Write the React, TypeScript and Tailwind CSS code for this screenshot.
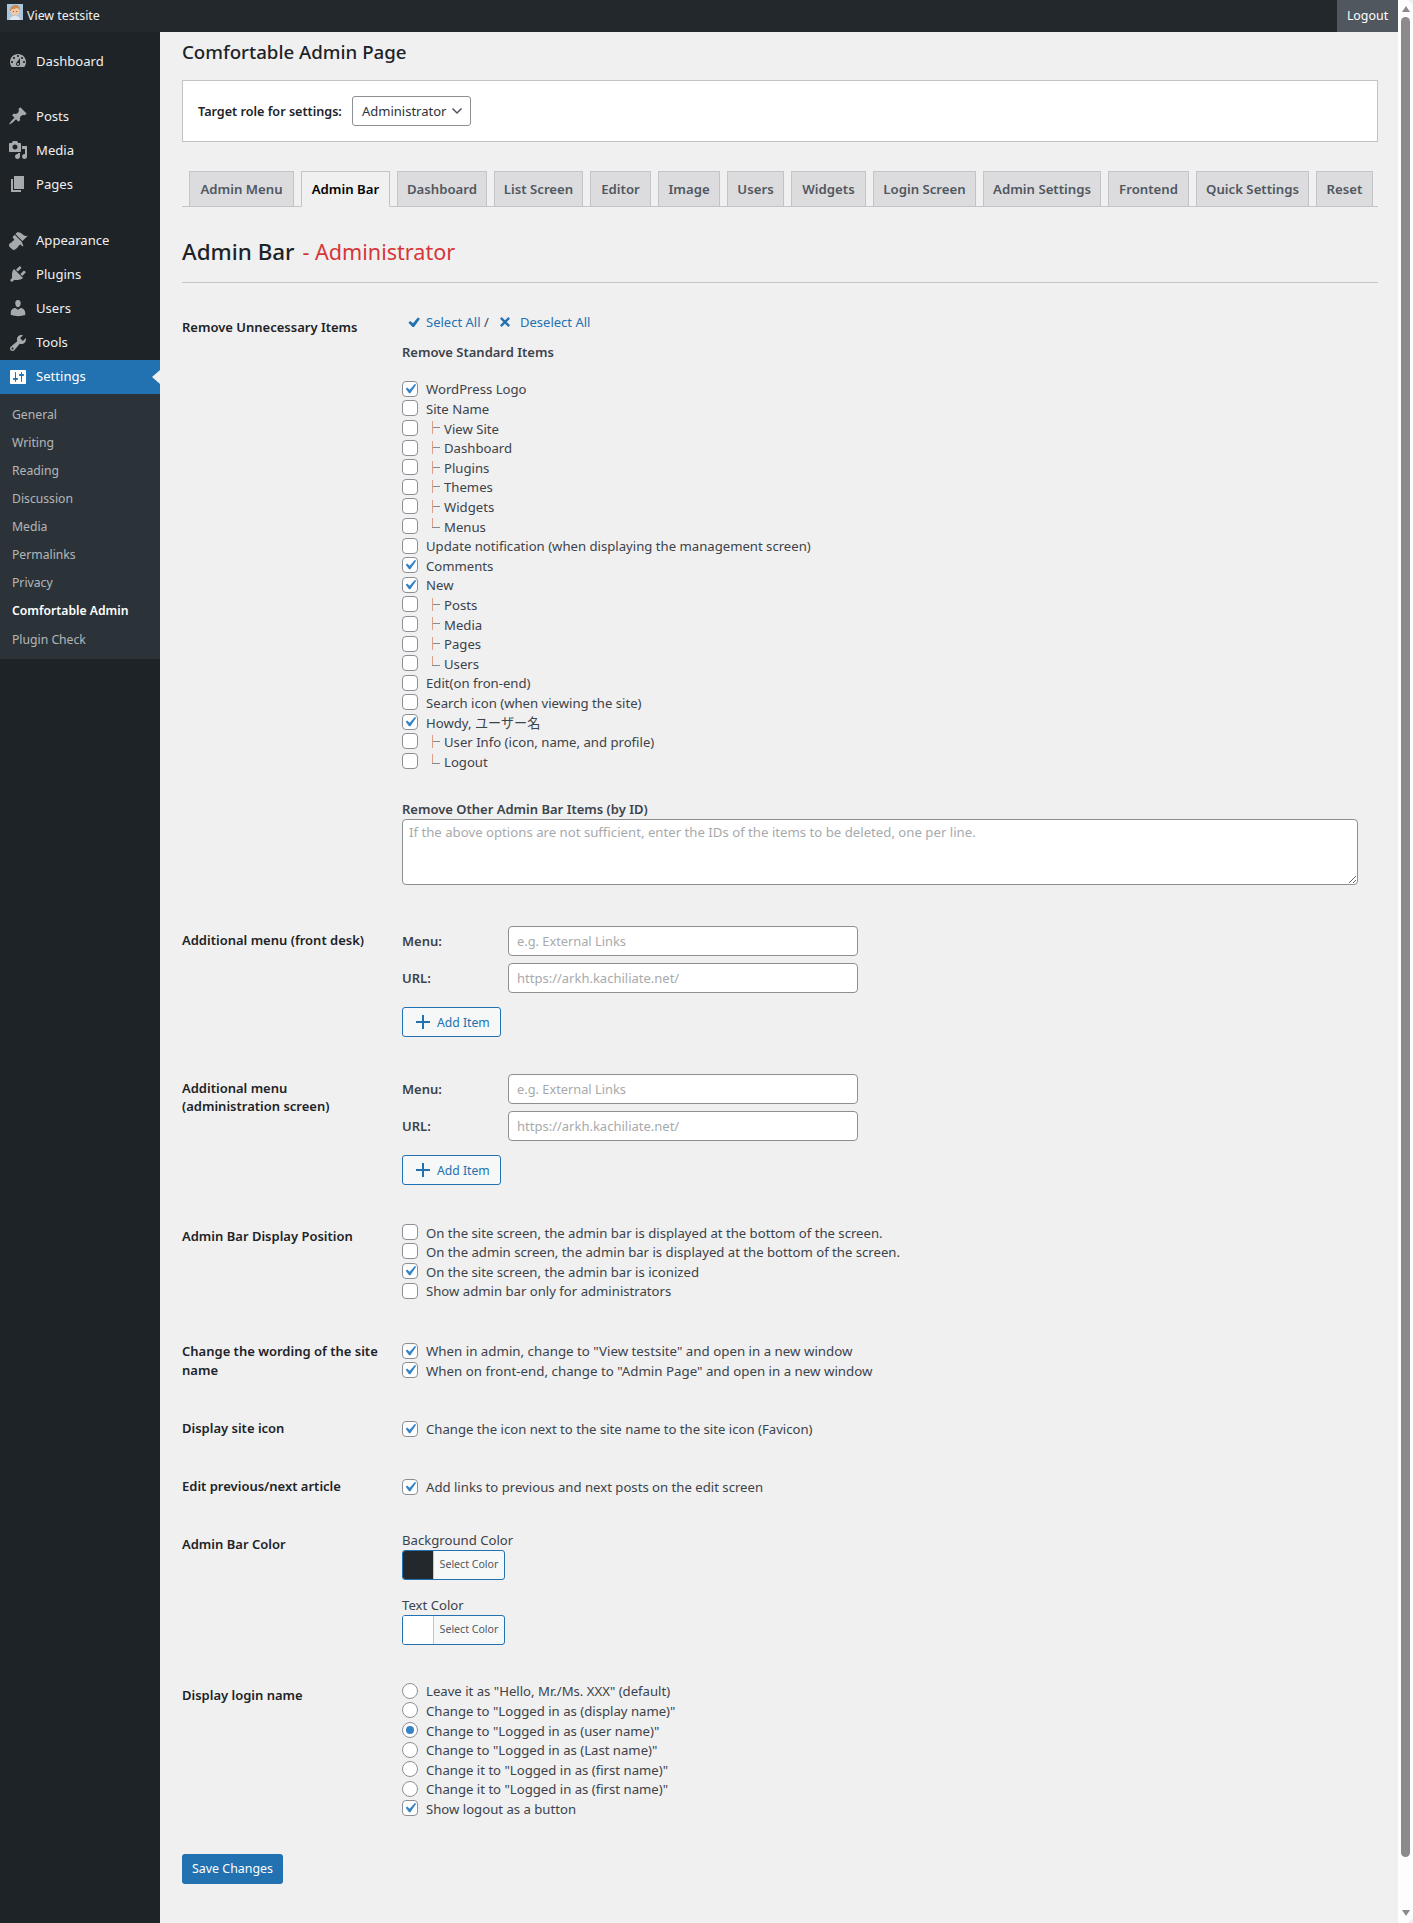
import React from 'react';

// dashicons paths, viewBox 0 0 20 20
const ICONS: Record<string, string> = {
  dashboard:
    'M3.76 16h12.48c1.1-1.37 1.76-3.11 1.76-5 0-4.42-3.58-8-8-8s-8 3.58-8 8c0 1.89.66 3.63 1.76 5zM10 4c.55 0 1 .45 1 1s-.45 1-1 1-1-.45-1-1 .45-1 1-1zM6 6c.55 0 1 .45 1 1s-.45 1-1 1-1-.45-1-1 .45-1 1-1zm8 0c.55 0 1 .45 1 1s-.45 1-1 1-1-.45-1-1 .45-1 1-1zm-5.37 5.55L12 7v6c0 1.1-.9 2-2 2s-2-.9-2-2c0-.57.24-1.08.63-1.45zM4 10c.55 0 1 .45 1 1s-.45 1-1 1-1-.45-1-1 .45-1 1-1zm12 0c.55 0 1 .45 1 1s-.45 1-1 1-1-.45-1-1 .45-1 1-1zm-5 3c0-.55-.45-1-1-1s-1 .45-1 1 .45 1 1 1 1-.45 1-1z',
  post: 'M10.44 3.02l1.82-1.82 6.36 6.35-1.83 1.82c-1.05-.68-2.48-.57-3.41.36l-.75.75c-.92.93-1.04 2.35-.35 3.41l-1.83 1.82-2.41-2.41-2.8 2.79c-.42.42-3.38 2.71-3.8 2.29s1.86-3.39 2.28-3.81l2.79-2.79L4.1 9.36l1.83-1.82c1.05.69 2.48.57 3.4-.36l.75-.75c.93-.92 1.05-2.35.36-3.41z',
  media:
    'M13 11V4c0-.55-.45-1-1-1h-1.67L9 1H5L3.67 3H2c-.55 0-1 .45-1 1v7c0 .55.45 1 1 1h10c.55 0 1-.45 1-1zM7 4.5c1.38 0 2.5 1.12 2.5 2.5S8.38 9.5 7 9.5 4.5 8.38 4.5 7 5.62 4.5 7 4.5zM14 6h5v10.5c0 1.38-1.12 2.5-2.5 2.5S14 17.88 14 16.5s1.12-2.5 2.5-2.5c.17 0 .34.02.5.05V9h-3V6zm-4 8.05V13h2v3.5c0 1.38-1.12 2.5-2.5 2.5S7 17.88 7 16.5 8.12 14 9.5 14c.17 0 .34.02.5.05z',
  page: 'M6 15V2h10v13H6zm-1 1h8v2H3V5h2v11z',
  appearance:
    'M14.48 11.06L7.41 3.99l1.5-1.5c.5-.56 2.3-.47 3.51.32 1.21.8 1.43 1.28 2.91 2.1 1.18.64 2.45 1.26 4.45.85zm-.71.71L6.7 4.7 4.93 6.47c-.39.39-.39 1.02 0 1.41l1.06 1.06c.39.39.39 1.03 0 1.42-.6.6-1.43 1.11-2.21 1.69-.35.26-.7.53-1.01.84C1.43 13.23 1 14.13 1 15c0 .87.43 1.77 1.77 3.11 1.34 1.34 2.24 1.77 3.11 1.77.87 0 1.77-.43 3.11-1.77.31-.31.58-.66.84-1.01.58-.78 1.09-1.61 1.69-2.21.39-.39 1.03-.39 1.42 0l1.06 1.06c.39.39 1.02.39 1.41 0z',
  plugins:
    'M13.11 4.36L9.87 7.6 8 5.73l3.24-3.24c.35-.34 1.05-.2 1.56.32.52.51.66 1.21.31 1.55zm-8 1.77l.91-1.12 9.01 9.01-1.19.84c-.71.71-2.63 1.16-3.82 1.16H6.14L4.9 17.26c-.59.59-1.54.59-2.12 0-.59-.58-.59-1.53 0-2.12l1.24-1.24v-3.88c0-1.13.4-3.19 1.09-3.89zm7.26 3.97l3.24-3.24c.34-.35 1.04-.21 1.55.31.52.51.66 1.21.31 1.55l-3.24 3.25z',
  users:
    'M10 9.25c-2.27 0-2.73-3.44-2.73-3.44C7 4.02 7.82 2 9.97 2c2.16 0 2.98 2.02 2.71 3.81 0 0-.41 3.44-2.68 3.44zm0 2.57L12.72 10c2.39 0 4.52 2.33 4.52 4.53v2.49s-3.65 1.13-7.24 1.13c-3.65 0-7.24-1.13-7.24-1.13v-2.49c0-2.25 1.94-4.48 4.47-4.48z',
  tools:
    'M16.68 9.77c-1.34 1.34-3.3 1.67-4.95.99l-5.41 6.52c-.99.99-2.59.99-3.58 0s-.99-2.59 0-3.57l6.52-5.42c-.68-1.65-.35-3.61.99-4.95 1.28-1.28 3.12-1.62 4.72-1.06l-2.89 2.89 2.82 2.82 2.86-2.87c.53 1.58.18 3.39-1.08 4.65zM3.81 16.21c.4.39 1.04.39 1.43 0 .4-.4.4-1.04 0-1.43-.39-.4-1.03-.4-1.43 0-.39.39-.39 1.03 0 1.43z',
  settings:
    'M18 16V4c0-.55-.45-1-1-1H3c-.55 0-1 .45-1 1v12c0 .55.45 1 1 1h14c.55 0 1-.45 1-1zM8 11h1c.55 0 1 .45 1 1s-.45 1-1 1H8v1.5c0 .28-.22.5-.5.5s-.5-.22-.5-.5V13H6c-.55 0-1-.45-1-1s.45-1 1-1h1V5.5c0-.28.22-.5.5-.5s.5.22.5.5V11zm5-2h-1c-.55 0-1-.45-1-1s.45-1 1-1h1V5.5c0-.28.22-.5.5-.5s.5.22.5.5V7h1c.55 0 1 .45 1 1s-.45 1-1 1h-1v5.5c0 .28-.22.5-.5.5s-.5-.22-.5-.5V9z',
};

const Dashicon = ({ name, className }: { name: string; className: string }) => (
  <svg viewBox="0 0 20 20" className={className} fill="currentColor" fillRule="evenodd">
    <path d={ICONS[name]} />
  </svg>
);

const MenuItem = ({ icon, label, active }: { icon: string; label: string; active?: boolean }) => (
  <div className={`relative flex h-[34.2px] items-center text-[13.1px] ${active ? 'bg-[#2271b1] text-white' : 'text-[#f0f0f1]'}`}>
    <Dashicon
      name={icon}
      className={`ml-[8px] h-[20px] w-[20px] shrink-0 ${active ? 'text-white' : 'text-[#a7aaad]'}`}
    />
    <span className="ml-[8px] pt-[1px]">{label}</span>
    {active && (
      <span className="absolute right-0 top-[10px] h-0 w-0 border-y-[7px] border-r-[8px] border-y-transparent border-r-[#f0f0f1]" />
    )}
  </div>
);

const SUBMENU = ['General', 'Writing', 'Reading', 'Discussion', 'Media', 'Permalinks', 'Privacy', 'Comfortable Admin', 'Plugin Check'];

const Sidebar = () => (
  <aside className="flex h-[1891px] w-[160px] shrink-0 flex-col bg-[#1d2327] pt-[12px]">
    <MenuItem icon="dashboard" label="Dashboard" />
    <div className="h-[20.8px]" />
    <MenuItem icon="post" label="Posts" />
    <MenuItem icon="media" label="Media" />
    <MenuItem icon="page" label="Pages" />
    <div className="h-[21.4px]" />
    <MenuItem icon="appearance" label="Appearance" />
    <MenuItem icon="plugins" label="Plugins" />
    <MenuItem icon="users" label="Users" />
    <MenuItem icon="tools" label="Tools" />
    <MenuItem icon="settings" label="Settings" active />
    <div className="h-[265px] bg-[#2c3338] pt-[7px] text-[12.2px]">
      {SUBMENU.map((item) => (
        <div
          key={item}
          className={`flex h-[28.1px] items-center pl-[12px] ${
            item === 'Comfortable Admin' ? 'font-semibold text-white' : 'text-[#f0f0f1]/70'
          }`}
        >
          {item}
        </div>
      ))}
    </div>
  </aside>
);

const TopBar = () => (
  <header className="flex h-[32px] items-center justify-between bg-[#23282d] text-[12.4px] text-[#f0f0f1]">
    <div className="flex items-center">
      <svg viewBox="0 0 16 16" className="ml-[7px] mt-[-8px] h-[16px] w-[16px]">
        <rect width="16" height="16" fill="#a9c6dc" />
        <path d="M3 16c0-3 2-4 5-4s5 1 5 4z" fill="#dfe8ee" />
        <circle cx="8" cy="7" r="4.5" fill="#f2c9a8" />
        <path d="M3 7c0-4 2.500-6 5.500-6S13 3 13 6c-1-1-2-2-3-2-2 1-4 1-5 1-.5 1-1 2-2 2z" fill="#c98a55" />
        <circle cx="6.500" cy="7.500" r=".6" fill="#6a4a3a" />
        <circle cx="9.800" cy="7.500" r=".6" fill="#6a4a3a" />
      </svg>
      <span className="ml-[4px] pt-[1px]">View testsite</span>
    </div>
    <div className="flex h-full w-[61px] items-center justify-center bg-[#50575e] pt-[1px] text-white">Logout</div>
  </header>
);

const TABS = [
  { label: 'Admin Menu', width: 'w-[105px]' },
  { label: 'Admin Bar', width: 'w-[89px]', active: true },
  { label: 'Dashboard', width: 'w-[90px]' },
  { label: 'List Screen', width: 'w-[89px]' },
  { label: 'Editor', width: 'w-[61px]' },
  { label: 'Image', width: 'w-[62px]' },
  { label: 'Users', width: 'w-[57px]' },
  { label: 'Widgets', width: 'w-[75px]' },
  { label: 'Login Screen', width: 'w-[103px]' },
  { label: 'Admin Settings', width: 'w-[118px]' },
  { label: 'Frontend', width: 'w-[81px]' },
  { label: 'Quick Settings', width: 'w-[113px]' },
  { label: 'Reset', width: 'w-[57px]' },
];

const Tabs = () => (
  <nav className="mt-[29px] flex h-[36px] gap-[7px] border-b border-[#c3c4c7] pl-[7px]">
    {TABS.map((tab) => (
      <div
        key={tab.label}
        className={`flex h-[36px] items-center justify-center border border-[#c3c4c7] pt-[1px] text-[13.2px] font-semibold whitespace-nowrap ${tab.width} ${
          tab.active ? 'border-b-[#f0f0f1] bg-[#f0f0f1] text-black' : 'bg-[#dcdcde] text-[#50575e]'
        }`}
      >
        {tab.label}
      </div>
    ))}
  </nav>
);

const Tick = () => (
  <svg viewBox="0 0 20 20" className="h-[20px] w-[20px] shrink-0" fill="#3582c4">
    <path d="M14.83 4.89l1.34.94-5.81 8.38H9.02L5.78 9.67l1.34-1.25 2.57 2.4z" />
  </svg>
);

const TreeMark = ({ last }: { last?: boolean }) => (
  <span className="relative mr-[4px] h-[19px] w-[14px] shrink-0">
    {last ? (
      <>
        <span className="absolute left-[6px] top-[2px] h-[9px] w-px bg-[#d9a08c]" />
        <span className="absolute left-[6px] top-[11px] h-px w-[8px] bg-[#8a8a8a]" />
      </>
    ) : (
      <>
        <span className="absolute left-[6px] top-[3px] h-[13px] w-px bg-[#d9a08c]" />
        <span className="absolute left-[7px] top-[9px] h-px w-[7px] bg-[#8a8a8a]" />
      </>
    )}
  </span>
);

type CheckProps = { label: string; checked?: boolean; tree?: 'mid' | 'last' };

const Check = ({ label, checked, tree }: CheckProps) => (
  <div className="flex h-[19.6px] items-center whitespace-nowrap">
    <span className="mr-[8px] flex h-[16px] w-[16px] shrink-0 items-center justify-center rounded-[4px] border border-[#8c8f94] bg-white">
      {checked && <Tick />}
    </span>
    {tree && <TreeMark last={tree === 'last'} />}
    <span className="pt-[3px]">{label}</span>
  </div>
);

const Radio = ({ label, checked }: { label: string; checked?: boolean }) => (
  <div className="flex h-[19.6px] items-center whitespace-nowrap">
    <span className="mr-[8px] flex h-[16px] w-[16px] shrink-0 items-center justify-center rounded-full border border-[#8c8f94] bg-white">
      {checked && <span className="h-[8px] w-[8px] rounded-full bg-[#3582c4]" />}
    </span>
    <span className="pt-[3px]">{label}</span>
  </div>
);

const STANDARD_ITEMS: CheckProps[] = [
  { label: 'WordPress Logo', checked: true },
  { label: 'Site Name' },
  { label: 'View Site', tree: 'mid' },
  { label: 'Dashboard', tree: 'mid' },
  { label: 'Plugins', tree: 'mid' },
  { label: 'Themes', tree: 'mid' },
  { label: 'Widgets', tree: 'mid' },
  { label: 'Menus', tree: 'last' },
  { label: 'Update notification (when displaying the management screen)' },
  { label: 'Comments', checked: true },
  { label: 'New', checked: true },
  { label: 'Posts', tree: 'mid' },
  { label: 'Media', tree: 'mid' },
  { label: 'Pages', tree: 'mid' },
  { label: 'Users', tree: 'last' },
  { label: 'Edit(on fron-end)' },
  { label: 'Search icon (when viewing the site)' },
  { label: 'Howdy, ユーザー名', checked: true },
  { label: 'User Info (icon, name, and profile)', tree: 'mid' },
  { label: 'Logout', tree: 'last' },
];

const RowLabel = ({ className, children }: { className: string; children: React.ReactNode }) => (
  <div className={`w-[220px] shrink-0 text-[13px] leading-[18.5px] font-semibold text-[#1d2327] ${className}`}>{children}</div>
);

const AdditionalMenu = ({ className, title }: { className: string; title: React.ReactNode }) => (
  <div className={`flex ${className}`}>
    <RowLabel className="mt-[5px]">{title}</RowLabel>
    <div className="flex flex-col">
      <div className="flex items-center">
        <span className="w-[106px] pt-[2px] text-[13px] font-semibold text-[#3c434a]">Menu:</span>
        <input
          placeholder="e.g. External Links"
          className="h-[30px] w-[350px] rounded-[4px] border border-[#8c8f94] bg-white px-[8px] text-[12.8px] outline-none placeholder:text-[#a7aaad]"
        />
      </div>
      <div className="mt-[7px] flex items-center">
        <span className="w-[106px] pt-[2px] text-[13px] font-semibold text-[#3c434a]">URL:</span>
        <input
          placeholder="https://arkh.kachiliate.net/"
          className="h-[30px] w-[350px] rounded-[4px] border border-[#8c8f94] bg-white px-[8px] text-[13px] outline-none placeholder:text-[#a7aaad]"
        />
      </div>
      <button className="mt-[14px] flex h-[30px] w-[99px] items-center rounded-[3px] border border-[#2271b1] bg-[#f6f7f7] pl-[13px] text-[12.2px] text-[#2271b1]">
        <svg viewBox="0 0 14 14" className="mr-[7px] h-[14px] w-[14px] shrink-0" fill="#2271b1">
          <path d="M6 0h2v6h6v2H8v6H6V8H0V6h6z" />
        </svg>
        <span className="pt-[2px]">Add Item</span>
      </button>
    </div>
  </div>
);

const ColorButton = ({ swatch }: { swatch: string }) => (
  <div className="flex h-[30px] w-[103px] overflow-hidden rounded-[3px] border border-[#2271b1] bg-[#f6f7f7]">
    <span className={`h-full w-[31px] shrink-0 border-r border-[#c3c4c7] ${swatch}`} />
    <span className="flex flex-1 items-center justify-center pt-[1px] text-[10.6px] text-[#50575e]">Select Color</span>
  </div>
);

const Scrollbar = () => (
  <div className="flex h-[1923px] w-[15px] shrink-0 flex-col items-center rounded-r-[8px] bg-[#fdfdfd] pt-[6px]">
    <span className="h-0 w-0 border-x-[4px] border-b-[6px] border-x-transparent border-b-[#8b8b8b]" />
    <span className="mt-[5px] h-[1840px] w-[9px] rounded-full bg-[#8b8b8b]" />
    <span className="mt-[53px] h-0 w-0 border-x-[4px] border-t-[6px] border-x-transparent border-t-[#8b8b8b]" />
  </div>
);

export default function App() {
  return (
    <div className="flex h-[1923px] w-[1413px] overflow-hidden bg-[#f0f0f1] font-['Noto_Sans','Noto_Sans_CJK_JP',sans-serif] text-[13.15px] text-[#3c434a]">
      <div className="w-[1398px] shrink-0">
        <TopBar />
        <div className="flex">
          <Sidebar />
          <main className="flex-1 pl-[22px] pr-[20px]">
            <h1 className="mt-[6px] h-[28px] text-[18.7px] leading-[28px] font-medium text-[#1d2327]">Comfortable Admin Page</h1>

            <div className="mt-[14px] flex h-[62px] items-center border border-[#c3c4c7] bg-white pl-[15px]">
              <span className="w-[154px] pt-[2px] text-[12.6px] font-semibold text-[#1d2327]">Target role for settings:</span>
              <div className="flex h-[30px] w-[119px] items-center justify-between rounded-[3px] border border-[#8c8f94] bg-white pl-[9px] pr-[7px] text-[13px] text-[#2c3338]">
                <span className="pt-[1px]">Administrator</span>
                <svg viewBox="0 0 12 8" className="h-[8px] w-[12px]" fill="none" stroke="#50575e" strokeWidth="1.500">
                  <path d="M1.500 1.500 6 6l4.500-4.500" />
                </svg>
              </div>
            </div>

            <Tabs />

            <h2 className="mt-[30px] h-[30px] text-[22.4px] leading-[30px] font-medium text-[#1d2327]">
              Admin Bar <span className="ml-[2px] text-[21.6px] font-normal text-[#d63638]">- Administrator</span>
            </h2>
            <hr className="mt-[15px] border-[#c3c4c7]" />

            {/* Remove unnecessary items */}
            <div className="mt-[29px] flex">
              <RowLabel className="mt-[6px]">Remove Unnecessary Items</RowLabel>
              <div className="flex-1">
                <div className="flex h-[20px] items-center text-[13px] text-[#2271b1]">
                  <svg viewBox="0 0 20 20" className="ml-[5px] mr-[5px] h-[14px] w-[14px]" fill="#2271b1">
                    <path d="M15.5 3.500l3 2-8.400 11.500H8L2 11l2.500-2.500 4.200 3.200z" />
                  </svg>
                  <span className="w-[74px] pt-[1px]">
                    Select All <span className="text-[#3c434a]">/</span>
                  </span>
                  <svg viewBox="0 0 12 12" className="mr-[10px] h-[10px] w-[10px]" fill="none" stroke="#2271b1" strokeWidth="2.800">
                    <path d="M1 1l10 10M11 1 1 11" />
                  </svg>
                  <span className="pt-[1px]">Deselect All</span>
                </div>
                <div className="mt-[10px] h-[20px] text-[13px] leading-[20px] font-semibold">Remove Standard Items</div>
                <div className="mt-[17px]">
                  {STANDARD_ITEMS.map((item) => (
                    <Check key={item.label} {...item} />
                  ))}
                </div>
                <div className="mt-[28px] h-[20px] text-[13px] leading-[20px] font-semibold">Remove Other Admin Bar Items (by ID)</div>
                <textarea
                  placeholder="If the above options are not sufficient, enter the IDs of the items to be deleted, one per line."
                  className="block h-[66px] w-[956px] rounded-[4px] border border-[#8c8f94] bg-white px-[6px] py-[3px] text-[13.2px] leading-[18px] outline-none placeholder:text-[#a7aaad]"
                />
              </div>
            </div>

            <AdditionalMenu className="mt-[41px]" title="Additional menu (front desk)" />
            <AdditionalMenu
              className="mt-[37px]"
              title={
                <>
                  Additional menu
                  <br />
                  (administration screen)
                </>
              }
            />

            <div className="mt-[37.2px] flex">
              <RowLabel className="mt-[5px]">Admin Bar Display Position</RowLabel>
              <div>
                <Check label="On the site screen, the admin bar is displayed at the bottom of the screen." />
                <Check label="On the admin screen, the admin bar is displayed at the bottom of the screen." />
                <Check label="On the site screen, the admin bar is iconized" checked />
                <Check label="Show admin bar only for administrators" />
              </div>
            </div>

            <div className="mt-[40.6px] flex">
              <RowLabel className="mt-[1px]">
                Change the wording of the site
                <br />
                name
              </RowLabel>
              <div className="text-[13.3px]">
                <Check label='When in admin, change to "View testsite" and open in a new window' checked />
                <Check label='When on front-end, change to "Admin Page" and open in a new window' checked />
              </div>
            </div>

            <div className="mt-[38.8px] flex">
              <RowLabel className="mt-0">Display site icon</RowLabel>
              <Check label="Change the icon next to the site name to the site icon (Favicon)" checked />
            </div>

            <div className="mt-[38.4px] flex">
              <RowLabel className="mt-0">Edit previous/next article</RowLabel>
              <Check label="Add links to previous and next posts on the edit screen" checked />
            </div>

            <div className="mt-[33.2px] flex">
              <RowLabel className="mt-[5px]">Admin Bar Color</RowLabel>
              <div>
                <div className="h-[20px] leading-[20px]">Background Color</div>
                <ColorButton swatch="bg-[#23282d]" />
                <div className="mt-[15px] h-[20px] leading-[20px]">Text Color</div>
                <ColorButton swatch="bg-white" />
              </div>
            </div>

            <div className="mt-[36.2px] flex">
              <RowLabel className="mt-[5px]">Display login name</RowLabel>
              <div>
                <Radio label='Leave it as "Hello, Mr./Ms. XXX" (default)' />
                <Radio label='Change to "Logged in as (display name)"' />
                <Radio label='Change to "Logged in as (user name)"' checked />
                <Radio label='Change to "Logged in as (Last name)"' />
                <Radio label='Change it to "Logged in as (first name)"' />
                <Radio label='Change it to "Logged in as (first name)"' />
                <Check label="Show logout as a button" checked />
              </div>
            </div>

            <button className="mt-[35.6px] h-[30px] w-[101px] rounded-[3px] bg-[#2271b1] pt-[2px] text-[12.4px] text-white">Save Changes</button>
          </main>
        </div>
      </div>
      <Scrollbar />
    </div>
  );
}
